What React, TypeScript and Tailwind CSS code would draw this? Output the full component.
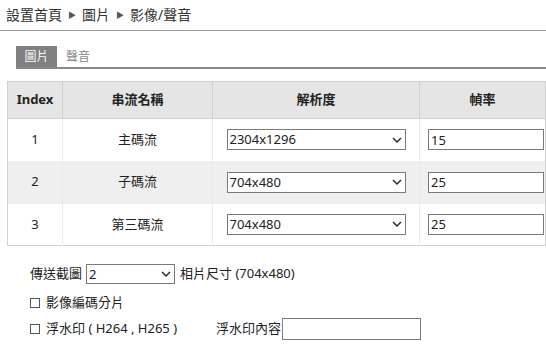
import React from "react";

interface StreamRow {
    index: number;
    name: string;
    resolution: string;
    fps: string;
}

const rows: StreamRow[] = [
    { index: 1, name: "主碼流", resolution: "2304x1296", fps: "15" },
    { index: 2, name: "子碼流", resolution: "704x480", fps: "25" },
    { index: 3, name: "第三碼流", resolution: "704x480", fps: "25" },
];

const Chevron: React.FC = () => (
    <svg className="pointer-events-none absolute right-[4px] top-1/2 -translate-y-1/2" width="10" height="6" viewBox="0 0 10 6" fill="none">
        <path d="M1 1l4 4 4-4" stroke="#222" strokeWidth="1.4" />
    </svg>
);

const Select: React.FC<{ value: string; className: string }> = ({ value, className }) => (
    <div className={"relative " + className}>
        <select
            defaultValue={value}
            className="h-full w-full appearance-none rounded-none border border-[#7a7a7a] bg-white pl-[2px] text-[13px] leading-none text-[#222] outline-none"
        >
            <option>{value}</option>
        </select>
        <Chevron />
    </div>
);

const App: React.FC = () => {
    return (
        <div className="h-[347px] w-[546px] overflow-hidden bg-white text-[#222]" style={{ fontFamily: '"Noto Sans", "Noto Sans CJK TC", sans-serif' }}>
            {/* breadcrumb */}
            <div className="flex h-[31px] items-center gap-[6px] border-b border-[#999] pb-[1px] pl-[6px] text-[14px] text-[#333]">
                <span>設置首頁</span>
                <span className="text-[8px] text-[#555]">▶</span>
                <span>圖片</span>
                <span className="text-[8px] text-[#555]">▶</span>
                <span>影像/聲音</span>
            </div>

            {/* tabs */}
            <div className="ml-[16px] mt-[15px] flex h-[23px] items-stretch border-b-2 border-[#888] text-[12px]">
                <div className="flex w-[41px] items-center justify-center bg-[#808080] text-white">圖片</div>
                <div className="flex items-center pl-[9px] text-[#888]">聲音</div>
            </div>

            {/* table */}
            <table className="ml-[7px] mt-[12px] w-[539px] table-fixed border-collapse border border-[#d0d0d0] text-[13px]">
                <colgroup>
                    <col className="w-[55px]" />
                    <col className="w-[150px]" />
                    <col className="w-[207px]" />
                    <col />
                </colgroup>
                <thead>
                    <tr className="h-[37px] bg-[#e5e5e5] font-bold">
                        <th className="border-b border-r border-[#d0d0d0]">Index</th>
                        <th className="border-b border-r border-[#d0d0d0]">串流名稱</th>
                        <th className="border-b border-r border-[#d0d0d0]">解析度</th>
                        <th className="border-b border-[#d0d0d0]">幀率</th>
                    </tr>
                </thead>
                <tbody>
                    {rows.map((row, i) => (
                        <tr key={row.index} className={(i === 1 ? "h-[43px] bg-[#efefef]" : "h-[42px] bg-white")}>
                            <td className="border-r border-[#ebebeb] text-center">{row.index}</td>
                            <td className="border-r border-[#ebebeb] text-center">{row.name}</td>
                            <td className="border-r border-[#ebebeb]">
                                <div className="flex justify-center">
                                    <Select value={row.resolution} className="h-[21px] w-[179px]" />
                                </div>
                            </td>
                            <td className="pl-[8px]">
                                <input
                                    defaultValue={row.fps}
                                    className="block h-[21px] w-[116px] border border-[#7a7a7a] bg-white pl-[2px] text-[13px] text-[#222] outline-none"
                                />
                            </td>
                        </tr>
                    ))}
                </tbody>
            </table>

            {/* bottom options */}
            <div className="ml-[30px] mt-[18px] flex items-center text-[13px]">
                <span className="mr-[4px]">傳送截圖</span>
                <Select value="2" className="h-[20px] w-[89px]" />
                <span className="ml-[5px]">相片尺寸 (704x480)</span>
            </div>
            <div className="ml-[30px] mt-[11px] flex h-[16px] items-center text-[13px]">
                <span className="mr-[6px] h-[10px] w-[10px] border border-[#555]" />
                <span>影像編碼分片</span>
            </div>
            <div className="ml-[30px] mt-[7px] flex h-[22px] items-center text-[13px]">
                <span className="mr-[6px] h-[10px] w-[10px] border border-[#555]" />
                <span className="w-[170px]">浮水印 ( H264 , H265 )</span>
                <span className="mr-[1px]">浮水印內容</span>
                <input className="h-[22px] w-[139px] border border-[#7a7a7a] bg-white outline-none" />
            </div>
        </div>
    );
};

export default App;
